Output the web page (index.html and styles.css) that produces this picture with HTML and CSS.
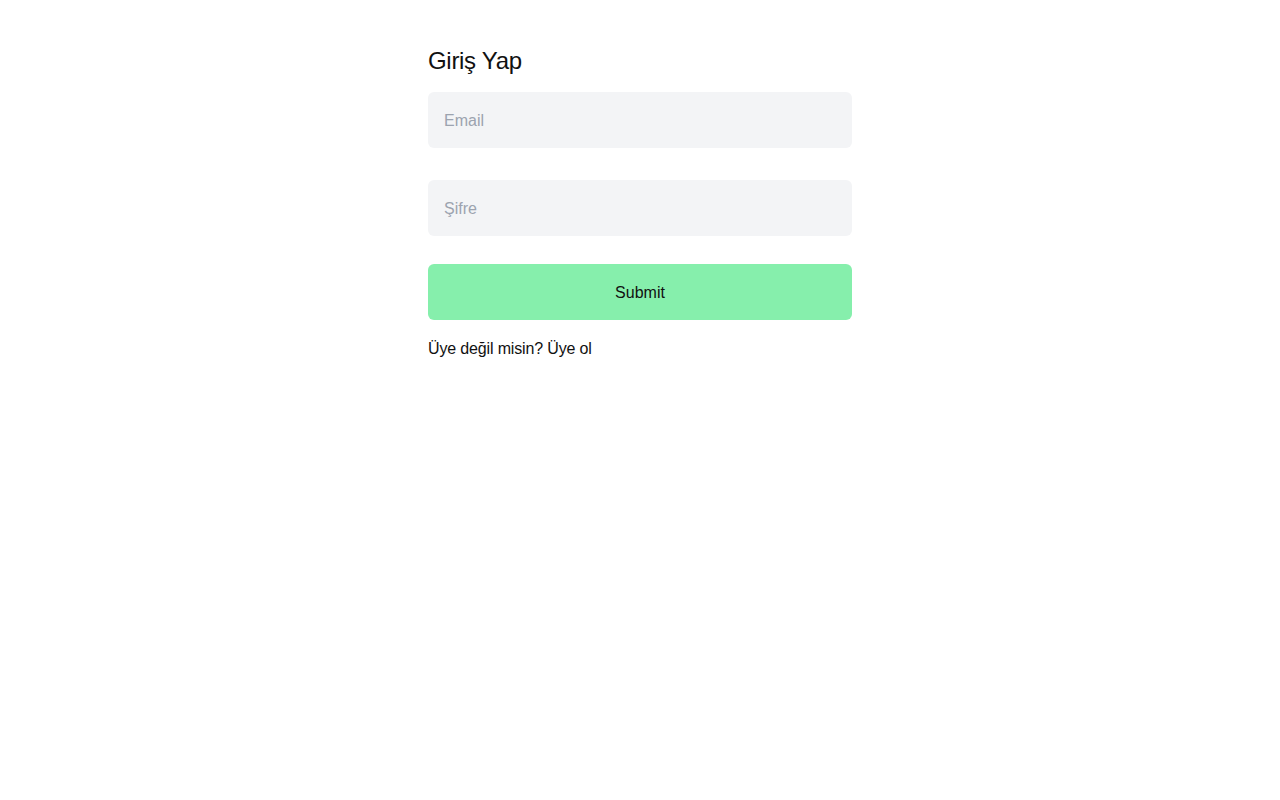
FILE: index.html
```html
<!DOCTYPE html>
<html lang="tr">
<head>
<meta charset="utf-8">
<title>Giriş Yap</title>
<link rel="stylesheet" href="styles.css">
</head>
<body>
<main class="wrap">
  <form class="form">
    <h1 class="title">Giriş Yap</h1>
    <input class="field field-email" type="email" placeholder="Email">
    <input class="field field-pass" type="password" placeholder="Şifre">
    <button class="submit" type="button">Submit</button>
    <p class="note">Üye değil misin? Üye ol</p>
  </form>
</main>
</body>
</html>
```

FILE: styles.css
```css
* { box-sizing: border-box; }
html, body { margin: 0; padding: 0; background: #fff; }
body { font-family: "Liberation Sans", Arial, sans-serif; color: #111; }
.wrap { width: 448px; margin: 0 auto; padding: 45px 12px 0; }
.form { display: flex; flex-direction: column; }
.title { margin: 0 0 15px; font-size: 24px; line-height: 32px; font-weight: 400; letter-spacing: -0.3px; }
.field {
  height: 56px; border: 0; border-radius: 6px; background: #f3f4f6;
  padding: 2px 16px 0; font: inherit; font-size: 16px; color: #111; outline: none;
}
.field::placeholder { color: #9ca3af; }
.field-email { margin-bottom: 32px; }
.field-pass { margin-bottom: 28px; }
.submit {
  height: 56px; border: 0; border-radius: 6px; background: #86efac;
  padding: 2px 0 0;
  font: inherit; font-size: 16px; color: #111; cursor: pointer;
}
.note { margin: 17px 0 0; font-size: 16px; line-height: 24px; letter-spacing: -0.15px; }
```
